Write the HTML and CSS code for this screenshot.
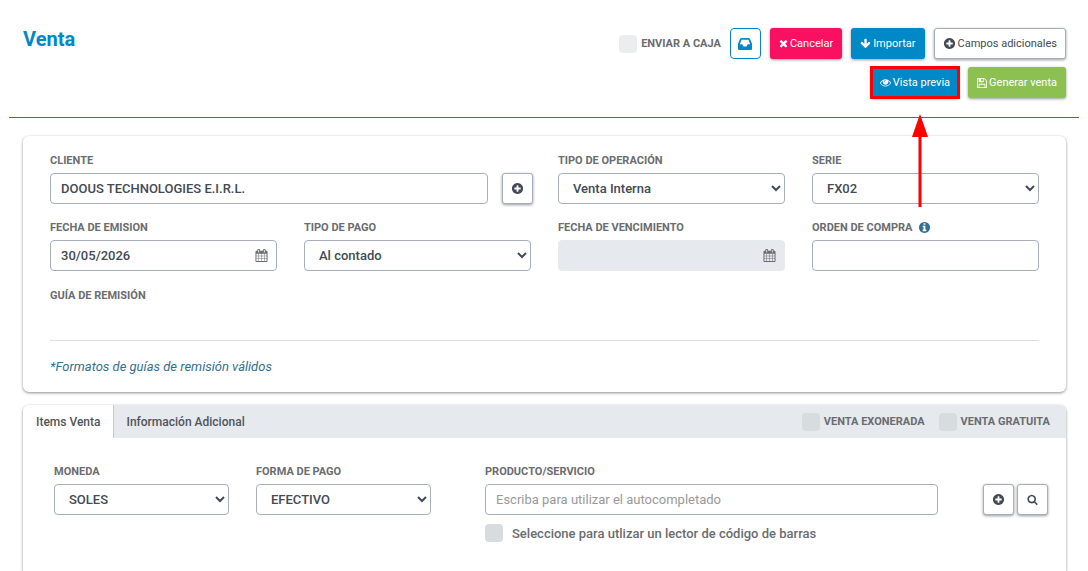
FILE: index.html
```html
<!DOCTYPE html>
<html lang="es">
<head>
<meta charset="utf-8">
<meta name="viewport" content="width=device-width, initial-scale=1">
<title>Venta</title>
<link rel="stylesheet" href="styles.css">
</head>
<body>
<svg class="sprite" aria-hidden="true">
  <symbol id="plus-circle" viewBox="0 0 1792 1792"><path d="M1344 960v-128q0-26-19-45t-45-19h-256v-256q0-26-19-45t-45-19h-128q-26 0-45 19t-19 45v256h-256q-26 0-45 19t-19 45v128q0 26 19 45t45 19h256v256q0 26 19 45t45 19h128q26 0 45-19t19-45v-256h256q26 0 45-19t19-45zm320-64q0 209-103 385.5t-279.5 279.5-385.5 103-385.5-103-279.5-279.5-103-385.5 103-385.5 279.5-279.5 385.5-103 385.5 103 279.5 279.5 103 385.5z"/></symbol>
  <symbol id="search" viewBox="0 0 1792 1792"><path d="M1216 832q0-185-131.5-316.5t-316.5-131.5-316.5 131.5-131.5 316.5 131.5 316.5 316.5 131.5 316.5-131.5 131.5-316.5zm512 832q0 52-38 90t-90 38q-54 0-90-38l-343-342q-179 124-399 124-143 0-273.5-55.5t-225-150-150-225-55.5-273.5 55.5-273.5 150-225 225-150 273.5-55.5 273.5 55.5 225 150 150 225 55.5 273.5q0 220-124 399l343 343q37 37 37 90z"/></symbol>
  <symbol id="times" viewBox="192 192 1408 1600"><path d="M1490 1322q0 40-28 68l-136 136q-28 28-68 28t-68-28l-294-294-294 294q-28 28-68 28t-68-28l-136-136q-28-28-28-68t28-68l294-294-294-294q-28-28-28-68t28-68l136-136q28-28 68-28t68 28l294 294 294-294q28-28 68-28t68 28l136 136q28 28 28 68t-28 68l-294 294 294 294q28 28 28 68z"/></symbol>
  <symbol id="arrow-down" viewBox="0 0 1792 1792"><path d="M1675 832q0 53-37 90l-651 652q-39 37-91 37-53 0-90-37l-651-652q-38-36-38-90 0-53 38-91l74-75q39-37 91-37 53 0 90 37l294 294v-704q0-52 38-90t90-38h128q52 0 90 38t38 90v704l294-294q37-37 90-37 52 0 91 37l75 75q37 39 37 91z"/></symbol>
  <symbol id="info-circle" viewBox="128 128 1536 1536"><path d="M1152 1376v-160q0-14-9-23t-23-9h-96v-512q0-14-9-23t-23-9h-320q-14 0-23 9t-9 23v160q0 14 9 23t23 9h96v320h-96q-14 0-23 9t-9 23v160q0 14 9 23t23 9h448q14 0 23-9t9-23zm-128-896v-160q0-14-9-23t-23-9h-192q-14 0-23 9t-9 23v160q0 14 9 23t23 9h192q14 0 23-9t9-23zm640 416q0 209-103 385.5t-279.5 279.5-385.5 103-385.5-103-279.5-279.5-103-385.5 103-385.5 279.5-279.5 385.5-103 385.5 103 279.5 279.5 103 385.5z"/></symbol>
  <symbol id="eye" viewBox="0 0 1792 1792"><path d="M1664 960q-152-236-381-353 61 104 61 225 0 185-131.5 316.5t-316.5 131.5-316.5-131.5-131.5-316.5q0-121 61-225-229 117-381 353 133 205 333.5 326.5t434.5 121.5 434.5-121.5 333.5-326.5zm-720-384q0-20-14-34t-34-14q-125 0-214.5 89.5t-89.5 214.5q0 20 14 34t34 14 34-14 14-34q0-86 61-147t147-61q20 0 34-14t14-34zm848 384q0 34-20 69-140 230-376.5 368.5t-499.5 138.5-499.5-139-376.5-368q-20-35-20-69t20-69q140-229 376.5-368t499.5-139 499.5 139 376.5 368q20 35 20 69z"/></symbol>
  <symbol id="floppy" viewBox="128 128 1536 1536"><path d="M512 1536h768v-384h-768v384zm896 0h128v-896q0-14-10-38.5t-20-34.5l-281-281q-10-10-34-20t-39-10v416q0 40-28 68t-68 28h-576q-40 0-68-28t-28-68v-416h-128v1280h128v-416q0-40 28-68t68-28h832q40 0 68 28t28 68v416zm-384-928v-320q0-13-9.5-22.5t-22.5-9.5h-192q-13 0-22.5 9.5t-9.5 22.5v320q0 13 9.5 22.5t22.5 9.5h192q13 0 22.5-9.5t9.5-22.5zm640 32v928q0 40-28 68t-68 28h-1344q-40 0-68-28t-28-68v-1344q0-40 28-68t68-28h928q40 0 88 20t76 48l280 280q28 28 48 76t20 88z"/></symbol>
  <symbol id="calendar" viewBox="0 0 1792 1792"><path d="M192 1664h288v-288h-288v288zm352 0h320v-288h-320v288zm-352-352h288v-320h-288v320zm352 0h320v-320h-320v320zm-352-384h288v-288h-288v288zm736 736h320v-288h-320v288zm-384-736h320v-288h-320v288zm768 736h288v-288h-288v288zm-384-352h320v-320h-320v320zm-352-864v-288q0-13-9.5-22.5t-22.5-9.5h-64q-13 0-22.5 9.5t-9.5 22.5v288q0 13 9.5 22.5t22.5 9.5h64q13 0 22.5-9.5t9.5-22.5zm736 864h288v-320h-288v320zm-384-384h320v-288h-320v288zm384 0h288v-288h-288v288zm32-480v-288q0-13-9.5-22.5t-22.5-9.5h-64q-13 0-22.5 9.5t-9.5 22.5v288q0 13 9.5 22.5t22.5 9.5h64q13 0 22.5-9.5t9.5-22.5zm384-64v1280q0 52-38 90t-90 38h-1408q-52 0-90-38t-38-90v-1280q0-52 38-90t90-38h128v-96q0-66 47-113t113-47h64q66 0 113 47t47 113v96h384v-96q0-66 47-113t113-47h64q66 0 113 47t47 113v96h128q52 0 90 38t38 90z"/></symbol>
  <symbol id="inbox" viewBox="0 0 14 12"><path fill-rule="evenodd" d="M3.400 0h7.200q.9 0 1.300.8l1.900 4.400q.2.500.2 1v4.800q0 1-1 1H1q-1 0-1-1V6.200q0-.5.200-1L2.100.8Q2.500 0 3.400 0zM3.500 1.800 1.800 6.200h2.500l1.200 2.200h3l1.200-2.200h2.500l-1.700-4.400z"/></symbol>
</svg>

<header class="page-header">
  <h1 class="page-title">Venta</h1>
  <div class="toolbar">
    <div class="toolbar-row">
      <label class="check check-light"><input type="checkbox" class="check-box"><span class="check-caption">ENVIAR A CAJA</span></label>
      <button type="button" class="btn btn-outline btn-square" aria-label="Bandeja"><svg class="icon-inbox"><use href="#inbox"/></svg></button>
      <button type="button" class="btn btn-danger"><svg class="icon-times"><use href="#times"/></svg>Cancelar</button>
      <button type="button" class="btn btn-primary"><svg class="icon"><use href="#arrow-down"/></svg>Importar</button>
      <button type="button" class="btn btn-default"><svg class="icon icon-large"><use href="#plus-circle"/></svg>Campos adicionales</button>
    </div>
    <div class="toolbar-row">
      <div class="callout">
        <button type="button" class="btn btn-primary"><svg class="icon"><use href="#eye"/></svg>Vista previa</button>
        <svg class="callout-arrow" viewBox="0 0 16 93" aria-hidden="true"><path d="M8 0l8 23h-6.500v70h-3v-70H0z"/></svg>
      </div>
      <button type="button" class="btn btn-success"><svg class="icon-floppy"><use href="#floppy"/></svg>Generar venta</button>
    </div>
  </div>
</header>

<main class="content">
  <section class="card sale-card">
    <div class="form-grid">
      <div class="field field-wide">
        <label class="label" for="cliente">CLIENTE</label>
        <div class="input-row">
          <input class="control" id="cliente" type="text" value="DOOUS TECHNOLOGIES E.I.R.L.">
          <button type="button" class="btn btn-default btn-square" aria-label="Agregar cliente"><svg class="icon icon-large"><use href="#plus-circle"/></svg></button>
        </div>
      </div>
      <div class="field">
        <label class="label" for="operacion">TIPO DE OPERACIÓN</label>
        <select class="control" id="operacion"><option>Venta Interna</option></select>
      </div>
      <div class="field">
        <label class="label" for="serie">SERIE</label>
        <select class="control" id="serie"><option>FX02</option></select>
      </div>
      <div class="field">
        <label class="label" for="emision">FECHA DE EMISION</label>
        <div class="date-field">
          <input class="control" id="emision" type="text" value="30/05/2026">
          <svg class="date-icon"><use href="#calendar"/></svg>
        </div>
      </div>
      <div class="field">
        <label class="label" for="pago">TIPO DE PAGO</label>
        <select class="control" id="pago"><option>Al contado</option></select>
      </div>
      <div class="field">
        <label class="label" for="vencimiento">FECHA DE VENCIMIENTO</label>
        <div class="date-field">
          <input class="control" id="vencimiento" type="text" disabled>
          <svg class="date-icon"><use href="#calendar"/></svg>
        </div>
      </div>
      <div class="field">
        <label class="label" for="orden">ORDEN DE COMPRA<svg class="icon-info"><use href="#info-circle"/></svg></label>
        <input class="control" id="orden" type="text">
      </div>
    </div>
    <div class="guide">
      <h2 class="label">GUÍA DE REMISIÓN</h2>
      <a class="guide-link" href="#formatos">*Formatos de guías de remisión válidos</a>
    </div>
  </section>

  <section class="card items-card">
    <div class="tab-bar">
      <button type="button" class="tab tab-active">Items Venta</button>
      <button type="button" class="tab">Información Adicional</button>
      <div class="tab-options">
        <label class="check"><input type="checkbox" class="check-box"><span class="check-caption">VENTA EXONERADA</span></label>
        <label class="check"><input type="checkbox" class="check-box"><span class="check-caption">VENTA GRATUITA</span></label>
      </div>
    </div>
    <div class="items-form">
      <div class="field">
        <label class="label" for="moneda">MONEDA</label>
        <select class="control" id="moneda"><option>SOLES</option></select>
      </div>
      <div class="field">
        <label class="label" for="forma">FORMA DE PAGO</label>
        <select class="control" id="forma"><option>EFECTIVO</option></select>
      </div>
      <div class="field product-field">
        <label class="label" for="producto">PRODUCTO/SERVICIO</label>
        <input class="control" id="producto" type="text" placeholder="Escriba para utilizar el autocompletado">
        <label class="check scanner-check"><input type="checkbox" class="check-box">Seleccione para utlizar un lector de código de barras</label>
      </div>
      <div class="product-actions">
        <button type="button" class="btn btn-default btn-square" aria-label="Agregar producto"><svg class="icon icon-large"><use href="#plus-circle"/></svg></button>
        <button type="button" class="btn btn-default btn-square" aria-label="Buscar producto"><svg class="icon"><use href="#search"/></svg></button>
      </div>
    </div>
  </section>
</main>
</body>
</html>
```

FILE: styles.css
```css
* {
  box-sizing: border-box;
}

body {
  display: flex;
  flex-direction: column;
  min-height: 100vh;
  margin: 0;
  background: #fff;
  color: #6a6c6f;
  font-family: Roboto, "Liberation Sans", sans-serif;
  font-size: 13px;
}

button,
input,
select {
  font: inherit;
}

svg {
  fill: currentColor;
  flex: none;
}

.sprite {
  position: absolute;
  width: 0;
  height: 0;
}

/* Header */

.page-header {
  display: flex;
  justify-content: space-between;
  margin: 0 9px;
  padding: 28px 13px 19px 14px;
  border-bottom: 1px solid #0c83ba;
}

.page-title {
  margin: 0;
  color: #0088c7;
  font-size: 20px;
  font-weight: 700;
  line-height: 23px;
}

.toolbar {
  display: flex;
  flex-direction: column;
  gap: 8px;
}

.toolbar-row {
  display: flex;
  justify-content: flex-end;
  gap: 9px;
}

/* Buttons */

.btn {
  display: inline-flex;
  align-items: center;
  justify-content: center;
  gap: 2px;
  height: 31px;
  padding: 0 8px;
  border: 1px solid transparent;
  border-radius: 3px;
  box-shadow: 0 1px 3px rgba(0, 0, 0, 0.4);
  font-size: 11px;
  white-space: nowrap;
}

.btn-square {
  width: 31px;
  padding: 0;
  flex: none;
}

.btn-primary {
  background: #0088c7;
  color: #fff;
}

.btn-danger {
  background: #fa1060;
  color: #fff;
}

.btn-success {
  background: #8cc152;
  color: #fff;
}

.btn-default {
  border-color: #a6adbd;
  background: #fff;
  color: #434a54;
}

.btn-outline {
  border-color: #0088c7;
  border-radius: 4px;
  background: #fff;
  box-shadow: none;
  color: #0088c7;
}

.icon {
  width: 11px;
  height: 11px;
}

.icon-large {
  width: 13px;
  height: 13px;
}

.icon-times {
  width: 9px;
  height: 10px;
}

.icon-floppy {
  width: 10px;
  height: 10px;
}

.icon-inbox {
  width: 14px;
  height: 12px;
}

.icon-info {
  width: 11px;
  height: 11px;
  margin-left: 7px;
  color: #31708f;
}

/* Highlight around the preview button */

.callout {
  position: relative;
  display: flex;
  outline: 3px solid #f00;
  outline-offset: -2px;
}

.callout-arrow {
  position: absolute;
  z-index: 1;
  top: 47px;
  left: calc(50% - 3px);
  width: 16px;
  height: 93px;
  fill: #f00;
}

/* Cards */

.content {
  display: flex;
  flex: 1;
  flex-direction: column;
  gap: 13px;
  padding: 18px 22px 0 23px;
}

.card {
  border-radius: 6px;
  background: #fff;
  box-shadow: 0 1px 3px rgba(0, 0, 0, 0.45);
}

.sale-card {
  padding: 15px 27px 16px;
}

.form-grid {
  display: grid;
  grid-template-columns: repeat(4, minmax(0, 1fr));
  gap: 14px 27px;
}

.field {
  min-width: 0;
}

.field-wide {
  grid-column: span 2;
}

.label {
  display: flex;
  align-items: center;
  height: 18px;
  margin: 0 0 4px;
  color: #6a6c6f;
  font-size: 11px;
  font-weight: 700;
}

.control {
  display: block;
  width: 100%;
  height: 31px;
  padding: 0 10px;
  border: 1px solid #a6adbd;
  border-radius: 4px;
  background: #fff;
  color: #434a54;
  font-size: 13px;
  font-weight: 500;
}

.control:disabled {
  border-color: #e6e9ed;
  background: #e6e9ed;
}

.control::placeholder {
  color: #999;
  font-weight: 400;
  opacity: 1;
}

.input-row {
  display: flex;
  gap: 14px;
  margin-right: -2px;
}

.date-field {
  position: relative;
}

.date-icon {
  position: absolute;
  top: 9px;
  right: 9px;
  width: 13px;
  height: 13px;
  color: #6a6c6f;
}

.guide {
  display: flex;
  flex-direction: column;
  margin-top: 15px;
}

.guide-link {
  margin-top: 32px;
  padding-top: 16px;
  border-top: 1px solid #dcdfe2;
  color: #31708f;
  font-size: 13px;
  font-style: italic;
  line-height: 19px;
  text-decoration: none;
}

/* Items card */

.items-card {
  flex: 1;
  border-radius: 6px 6px 0 0;
}

.tab-bar {
  display: flex;
  height: 33px;
  border-radius: 6px 6px 0 0;
  background: #e6e9ed;
}

.tab {
  padding: 0 13px;
  border: 0;
  background: none;
  color: #51555b;
  font-size: 12px;
  font-weight: 500;
}

.tab-active {
  padding: 0 12px 0 13px;
  border-right: 1px solid #c3c8d2;
  border-radius: 6px 0 0 0;
  background: #fff;
}

.tab-options {
  display: flex;
  gap: 14px;
  margin-left: auto;
  padding-right: 16px;
}

.check {
  display: flex;
  align-items: center;
  gap: 4px;
  color: #6a6c6f;
}

.check-box {
  width: 18px;
  height: 18px;
  margin: 0;
  border-radius: 4px;
  background: #d7dcde;
  appearance: none;
}

.check-box:checked {
  background: #0088c7;
}

.check-light .check-box {
  background: #ebedef;
}

.check-caption {
  font-size: 11px;
  font-weight: 700;
}

.items-form {
  display: grid;
  grid-template-columns: 175fr 175fr 480fr 83px;
  column-gap: 27px;
  padding: 24px 18px 28px 31px;
}

.product-field {
  padding-left: 27px;
}

.scanner-check {
  gap: 9px;
  margin-top: 9px;
  font-weight: 500;
}

.product-actions {
  display: flex;
  justify-content: flex-end;
  gap: 3px;
  padding-top: 22px;
}
```
